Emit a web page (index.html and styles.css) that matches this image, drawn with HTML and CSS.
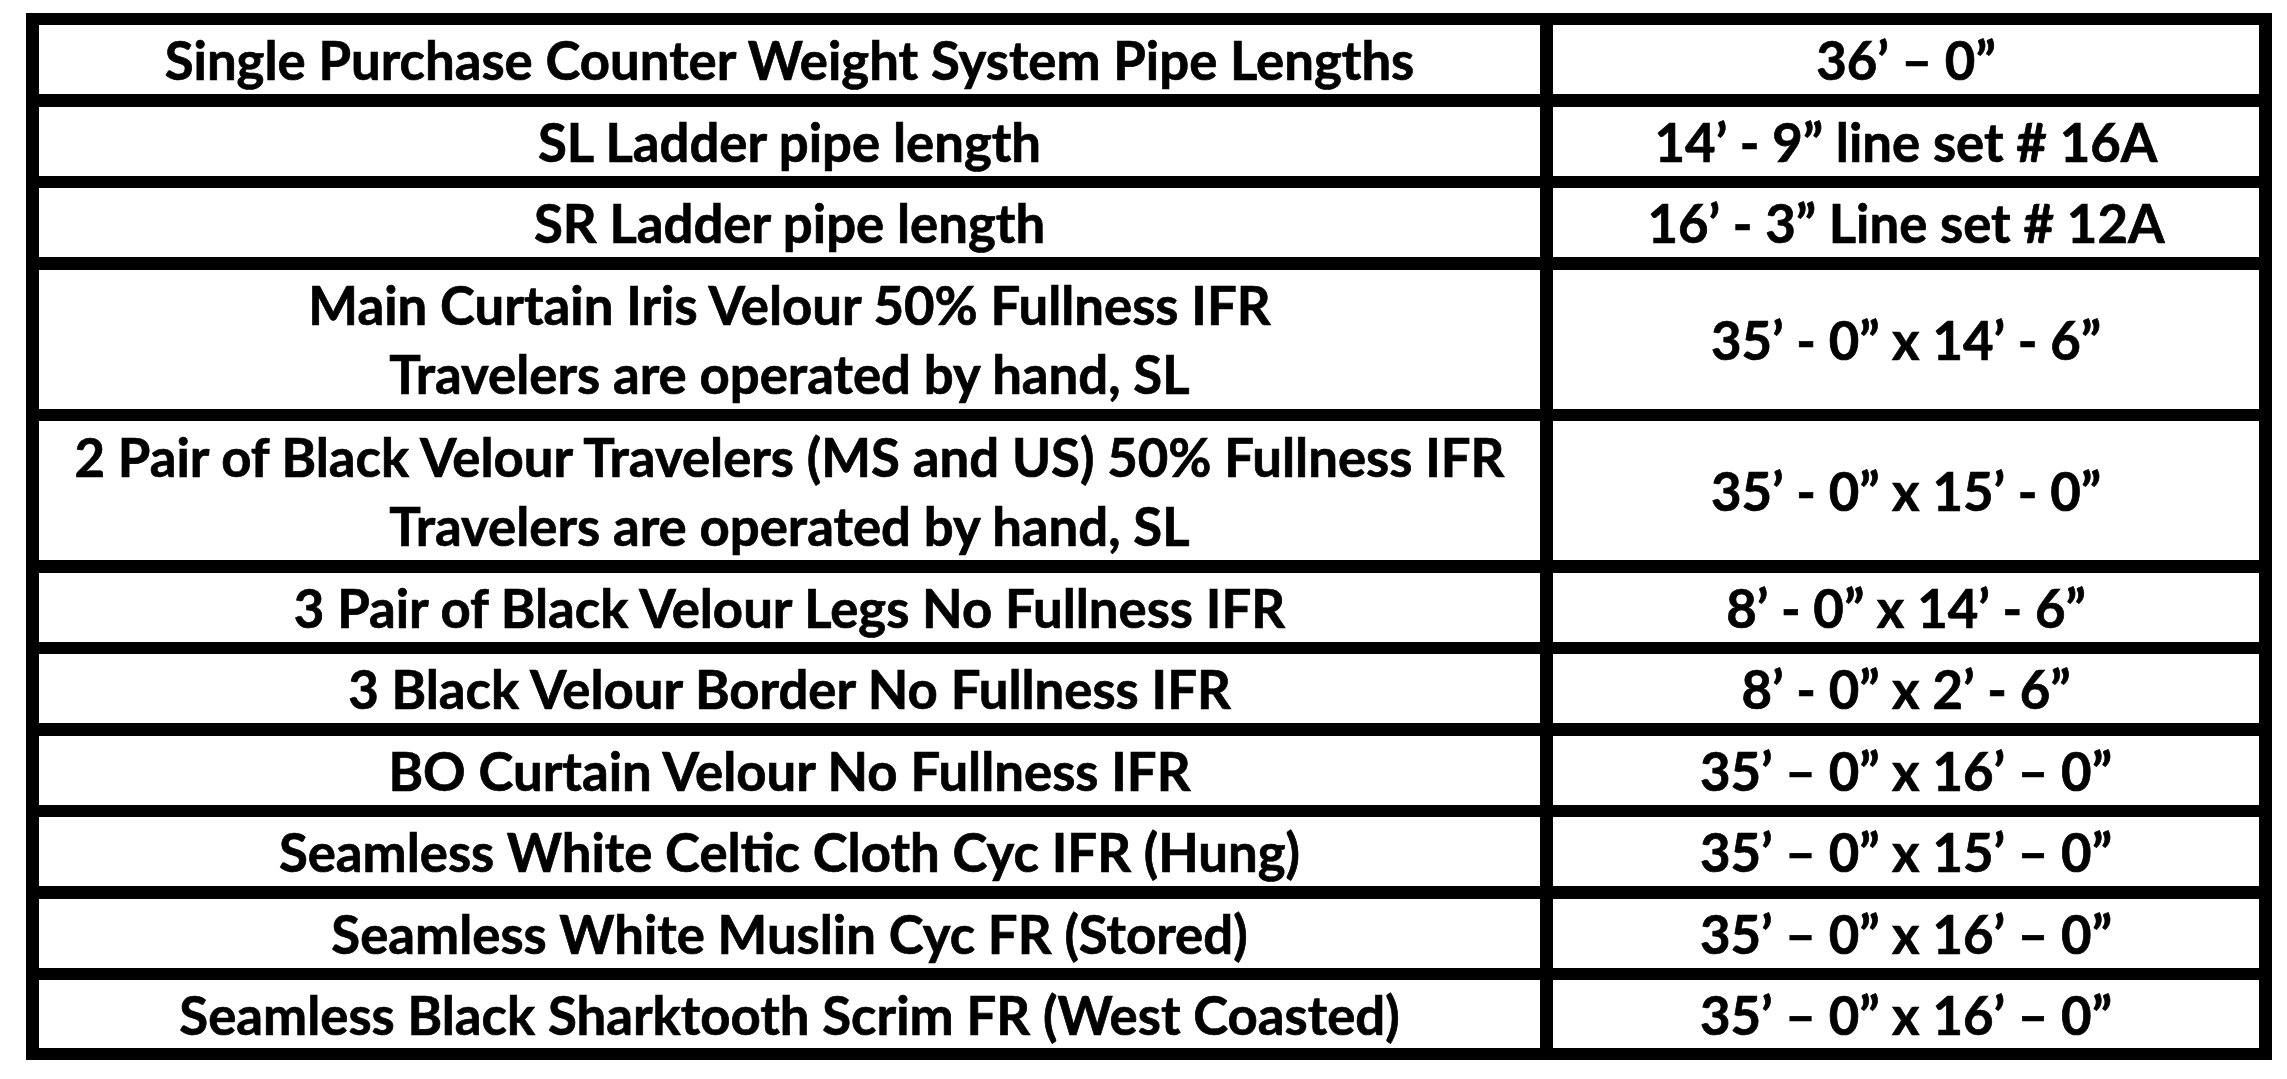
FILE: index.html
```html
<!DOCTYPE html>
<html lang="en">
<head>
<meta charset="utf-8">
<title>Pipe Lengths and Soft Goods</title>
<link rel="stylesheet" href="styles.css">
</head>
<body>
<div class="sheet">
  <div class="cell">Single Purchase Counter Weight System Pipe Lengths</div>
  <div class="cell">36’ – 0”</div>

  <div class="cell">SL Ladder pipe length</div>
  <div class="cell">14’ - 9” line set # 16A</div>

  <div class="cell">SR Ladder pipe length</div>
  <div class="cell">16’ - 3” Line set # 12A</div>

  <div class="cell">Main Curtain Iris Velour 50% Fullness IFR<br>Travelers are operated by hand, SL</div>
  <div class="cell">35’ - 0” x 14’ - 6”</div>

  <div class="cell">2 Pair of Black Velour Travelers (MS and US) 50% Fullness IFR<br>Travelers are operated by hand, SL</div>
  <div class="cell">35’ - 0” x 15’ - 0”</div>

  <div class="cell">3 Pair of Black Velour Legs No Fullness IFR</div>
  <div class="cell">8’ - 0” x 14’ - 6”</div>

  <div class="cell">3 Black Velour Border No Fullness IFR</div>
  <div class="cell">8’ - 0” x 2’ - 6”</div>

  <div class="cell">BO Curtain Velour No Fullness IFR</div>
  <div class="cell">35’ – 0” x 16’ – 0”</div>

  <div class="cell">Seamless White Celtic Cloth Cyc IFR (Hung)</div>
  <div class="cell">35’ – 0” x 15’ – 0”</div>

  <div class="cell">Seamless White Muslin Cyc FR (Stored)</div>
  <div class="cell">35’ – 0” x 16’ – 0”</div>

  <div class="cell">Seamless Black Sharktooth Scrim FR (West Coasted)</div>
  <div class="cell">35’ – 0” x 16’ – 0”</div>
</div>
</body>
</html>
```
FILE: styles.css
```css
html, body {
  margin: 0;
  padding: 0;
  background: #ffffff;
}

.sheet {
  margin: 13px 0 0 26px;
  width: 2246px;
  box-sizing: border-box;
  display: grid;
  grid-template-columns: 1501px 706px;
  grid-template-rows: 69px 69px 69px 139px 139px 69px 69px 69px 69px 69px 68px;
  column-gap: 13px;
  row-gap: 12.5px;
  padding: 12px 13px;
  background: #000000;
}

.cell {
  background: #ffffff;
  color: #000000;
  font-family: "Lato", "Open Sans", sans-serif;
  font-weight: 700;
  font-size: 52.7px;
  line-height: 69px;
  -webkit-text-stroke: 0.7px #000000;
  text-align: center;
  display: flex;
  flex-direction: column;
  justify-content: center;
  white-space: nowrap;
}
```
